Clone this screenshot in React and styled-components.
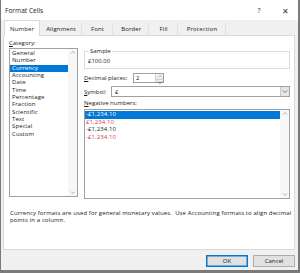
import React from "react";
import styled, { createGlobalStyle } from "styled-components";

const Global = createGlobalStyle`
  html, body { margin: 0; padding: 0; background: #7a7a7a; }
  * { box-sizing: border-box; }
  body { font-family: "Open Sans", "Noto Sans", sans-serif; font-size: 6px; color: #1a1a1a; }
`;

const Window = styled.div`
  width: 300px;
  height: 273px;
  background: #f0f0f0;
  border-style: solid;
  border-color: #7a7a7a;
  border-width: 0 2px 3px 1px;
  display: flex;
  flex-direction: column;
  overflow: hidden;
`;

const TitleBar = styled.div`
  height: 20px;
  background: #ffffff;
  display: flex;
  align-items: center;
  padding-left: 4px;
  font-size: 6.6px;
  color: #1a1a1a;
`;

const Title = styled.span`
  flex: 1;
`;

const TitleButton = styled.span`
  width: 26px;
  text-align: center;
  font-size: ${(p) => p.$size || 7}px;
  color: #333;
`;

const TabStrip = styled.div`
  height: 15px;
  display: flex;
  align-items: flex-end;
  padding-left: 3px;
  position: relative;
  z-index: 1;
`;

const Tab = styled.div`
  height: ${(p) => (p.$active ? 16 : 13)}px;
  padding: 0 ${(p) => p.$pad || 6}px;
  display: flex;
  align-items: center;
  background: ${(p) => (p.$active ? "#ffffff" : "#f0f0f0")};
  border: 1px solid ${(p) => (p.$active ? "#d9d9d9" : "transparent")};
  border-bottom: none;
  border-right: 1px solid ${(p) => (p.$active ? "#d9d9d9" : "#e3e3e3")};
  margin-bottom: ${(p) => (p.$active ? -1 : 0)}px;
  color: #1a1a1a;
  letter-spacing: 0.15px;
`;

const Panel = styled.div`
  height: 215px;
  margin: 0 3px 0 2px;
  background: #ffffff;
  border: 1px solid #d9d9d9;
  padding: 3px 4px 0 5px;
  display: flex;
  flex-direction: column;
`;

const Columns = styled.div`
  display: flex;
  gap: 6px;
`;

const LeftCol = styled.div`
  width: 69px;
  display: flex;
  flex-direction: column;
`;

const RightCol = styled.div`
  flex: 1;
  display: flex;
  flex-direction: column;
  padding-top: 9px;
`;

const Label = styled.div`
  height: 8px;
  line-height: 8px;
  white-space: nowrap;
  margin-top: ${(p) => p.$mt || 0}px;
  margin-bottom: ${(p) => p.$mb || 0}px;
  u { text-decoration: underline; text-underline-offset: 1px; }
`;

const ListBox = styled.div`
  height: ${(p) => p.$h}px;
  border: 1px solid #a0a0a0;
  display: flex;
  background: #fff;
`;

const ListItems = styled.div`
  flex: 1;
  padding: 1px 0 0 0;
  display: flex;
  flex-direction: column;
`;

const Item = styled.div`
  height: ${(p) => p.$h || 7.35}px;
  line-height: ${(p) => p.$h || 7.35}px;
  padding-left: ${(p) => p.$pl || 2}px;
  white-space: nowrap;
  letter-spacing: 0.1px;
  background: ${(p) => (p.$selected ? "#0078d7" : "transparent")};
  color: ${(p) => (p.$selected ? "#ffffff" : p.$red ? "#d83b4b" : "#1a1a1a")};
`;

const ScrollBar = styled.div`
  width: 9px;
  display: flex;
  flex-direction: column;
  justify-content: space-between;
  align-items: center;
  background: #f7f7f7;
  padding: 1px 0;
`;

const Arrow = styled.svg`
  width: 6px;
  height: 5px;
`;

const Fieldset = styled.fieldset`
  margin: 0;
  padding: 3px 3px 2px 3px;
  border: 1px solid #dcdcdc;
  height: 21px;
  legend {
    padding: 0 1px;
    margin-left: 1px;
    line-height: 7px;
    font-size: 6px;
  }
`;

const SampleValue = styled.div`
  line-height: 7px;
`;

const FieldRow = styled.div`
  display: flex;
  align-items: center;
  margin-top: ${(p) => p.$mt || 0}px;
  height: ${(p) => p.$h}px;
`;

const FieldLabel = styled.div`
  width: ${(p) => p.$w}px;
  white-space: nowrap;
  u { text-decoration: underline; text-underline-offset: 1px; }
`;

const SpinBox = styled.div`
  width: 31px;
  height: 100%;
  border: 1px solid #a0a0a0;
  display: flex;
  background: #fff;
`;

const SpinText = styled.div`
  flex: 1;
  padding-left: 2px;
  display: flex;
  align-items: center;
`;

const SpinButtons = styled.div`
  width: 8px;
  display: flex;
  flex-direction: column;
  border-left: 1px solid #d0d0d0;
  background: #f0f0f0;
  div {
    flex: 1;
    display: flex;
    align-items: center;
    justify-content: center;
  }
  div + div { border-top: 1px solid #d0d0d0; }
`;

const Select = styled.div`
  flex: 1;
  height: 100%;
  border: 1px solid #a0a0a0;
  display: flex;
  background: #fff;
`;

const SelectText = styled.div`
  flex: 1;
  padding-left: 3px;
  display: flex;
  align-items: center;
`;

const DropButton = styled.div`
  width: 9px;
  background: #e5e5e5;
  border-left: 1px solid #c8c8c8;
  display: flex;
  align-items: center;
  justify-content: center;
`;

const Description = styled.div`
  margin-top: 11px;
  line-height: 6.8px;
  padding-left: 1px;
  white-space: nowrap;
  letter-spacing: 0.1px;
`;

const Footer = styled.div`
  flex: 1;
  display: flex;
  justify-content: flex-end;
  align-items: center;
  gap: 5px;
  padding-right: 3px;
  padding-top: 1px;
`;

const Button = styled.div`
  width: 42px;
  height: 12px;
  display: flex;
  align-items: center;
  justify-content: center;
  background: #e1e1e1;
  border: 1px solid ${(p) => (p.$default ? "#0078d7" : "#adadad")};
  box-shadow: ${(p) => (p.$default ? "inset 0 0 0 0.5px #0078d7" : "none")};
  color: #1a1a1a;
`;

const Up = () => (
  <Arrow viewBox="0 0 6 5">
    <path d="M1 3.5 L3 1.5 L5 3.5" fill="none" stroke="#a8a8a8" strokeWidth="0.9" />
  </Arrow>
);
const Down = ({ color = "#a8a8a8" }) => (
  <Arrow viewBox="0 0 6 5">
    <path d="M1 1.5 L3 3.5 L5 1.5" fill="none" stroke={color} strokeWidth="0.9" />
  </Arrow>
);

const categories = [
  "General", "Number", "Currency", "Accounting", "Date", "Time",
  "Percentage", "Fraction", "Scientific", "Text", "Special", "Custom",
];

const negatives = [
  { t: "-£1,234.10", sel: true },
  { t: "£1,234.10", red: true },
  { t: "-£1,234.10" },
  { t: "-£1,234.10", red: true },
];

const tabs = [
  { t: "Number", active: true, pad: 5 },
  { t: "Alignment", pad: 5 },
  { t: "Font", pad: 8 },
  { t: "Border", pad: 7 },
  { t: "Fill", pad: 9 },
  { t: "Protection", pad: 8 },
];

export default function App() {
  return (
    <>
      <Global />
      <Window>
        <TitleBar>
          <Title>Format Cells</Title>
          <TitleButton>?</TitleButton>
          <TitleButton $size={8}>✕</TitleButton>
        </TitleBar>
        <TabStrip>
          {tabs.map((tb) => (
            <Tab key={tb.t} $active={tb.active} $pad={tb.pad}>{tb.t}</Tab>
          ))}
        </TabStrip>
        <Panel>
          <Columns>
            <LeftCol>
              <Label $mb={1}><u>C</u>ategory:</Label>
              <ListBox $h={149}>
                <ListItems>
                  {categories.map((c) => (
                    <Item key={c} $selected={c === "Currency"}>{c}</Item>
                  ))}
                </ListItems>
                <ScrollBar>
                  <Up />
                  <Down />
                </ScrollBar>
              </ListBox>
            </LeftCol>
            <RightCol>
              <Fieldset>
                <legend>Sample</legend>
                <SampleValue>£100.00</SampleValue>
              </Fieldset>
              <FieldRow $mt={4} $h={10}>
                <FieldLabel $w={49}><u>D</u>ecimal places:</FieldLabel>
                <SpinBox>
                  <SpinText>2</SpinText>
                  <SpinButtons>
                    <div><Up /></div>
                    <div><Down color="#555" /></div>
                  </SpinButtons>
                </SpinBox>
              </FieldRow>
              <FieldRow $mt={3} $h={11}>
                <FieldLabel $w={27}><u>S</u>ymbol:</FieldLabel>
                <Select>
                  <SelectText>£</SelectText>
                  <DropButton><Down color="#666" /></DropButton>
                </Select>
              </FieldRow>
              <Label $mt={2} $mb={2}><u>N</u>egative numbers:</Label>
              <ListBox $h={90}>
                <ListItems>
                  {negatives.map((n, i) => (
                    <Item key={i} $pl={1} $h={7.7} $selected={n.sel} $red={n.red}>{n.t}</Item>
                  ))}
                </ListItems>
                <ScrollBar>
                  <Up />
                  <Down />
                </ScrollBar>
              </ListBox>
            </RightCol>
          </Columns>
          <Description>
            Currency formats are used for general monetary values.&nbsp; Use Accounting formats to align decimal
            <br />
            points in a column.
          </Description>
        </Panel>
        <Footer>
          <Button $default>OK</Button>
          <Button>Cancel</Button>
        </Footer>
      </Window>
    </>
  );
}
